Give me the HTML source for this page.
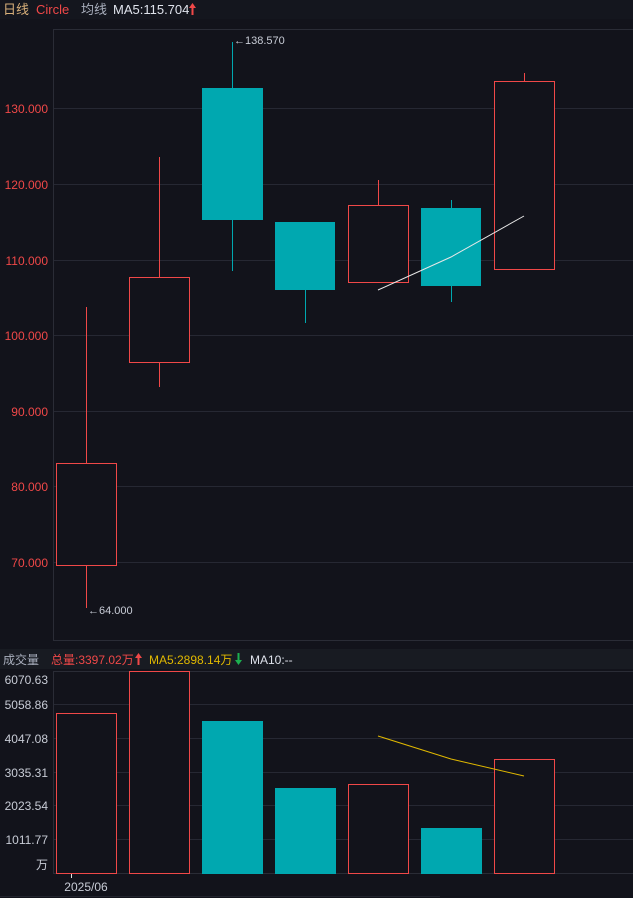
<!DOCTYPE html>
<html><head><meta charset="utf-8"><style>
html,body{margin:0;padding:0;background:#12131b;}
svg{display:block;font-family:"Liberation Sans","Noto Sans CJK SC",sans-serif;}
</style></head><body>
<svg width="633" height="898" xmlns="http://www.w3.org/2000/svg">
<rect width="633" height="898" fill="#12131b"/>
<rect x="0" y="0" width="633" height="19" fill="#14161e"/>
<text x="3" y="14" font-size="13" fill="#d8b07a">日线</text>
<text x="36" y="14" font-size="13" fill="#f04848">Circle</text>
<text x="81" y="14" font-size="13" fill="#a9afbd">均线</text>
<text x="113" y="14" font-size="13" fill="#dfe3ec">MA5:115.704</text>
<path d="M192.5 3 L189 8 L191.5 8 L191.5 15 L193.5 15 L193.5 8 L196 8 Z" fill="#f04848"/>
<!-- main chart frame -->
<rect x="53.5" y="29.5" width="590" height="611" fill="none" stroke="#2a2c36"/>
<g stroke="#262833" stroke-width="1">
<line x1="54" y1="108.5" x2="633" y2="108.5"/>
<line x1="54" y1="184.5" x2="633" y2="184.5"/>
<line x1="54" y1="260.5" x2="633" y2="260.5"/>
<line x1="54" y1="335.5" x2="633" y2="335.5"/>
<line x1="54" y1="411.5" x2="633" y2="411.5"/>
<line x1="54" y1="486.5" x2="633" y2="486.5"/>
<line x1="54" y1="562.5" x2="633" y2="562.5"/>
</g>
<g font-size="12" fill="#f04848" text-anchor="end">
<text x="48" y="113">130.000</text>
<text x="48" y="189">120.000</text>
<text x="48" y="265">110.000</text>
<text x="48" y="340">100.000</text>
<text x="48" y="416">90.000</text>
<text x="48" y="491">80.000</text>
<text x="48" y="567">70.000</text>
</g>
<!-- candles -->
<g stroke="#f04848" fill="#12131b" stroke-width="1">
<line x1="86.5" y1="307" x2="86.5" y2="463"/><line x1="86.5" y1="565" x2="86.5" y2="608"/>
<rect x="56.5" y="463.5" width="60" height="102"/>
<line x1="159.5" y1="157" x2="159.5" y2="277"/><line x1="159.5" y1="362" x2="159.5" y2="387"/>
<rect x="129.5" y="277.5" width="60" height="85"/>
<line x1="378.5" y1="180" x2="378.5" y2="205"/>
<rect x="348.5" y="205.5" width="60" height="77"/>
<line x1="524.5" y1="73" x2="524.5" y2="81"/>
<rect x="494.5" y="81.5" width="60" height="188"/>
</g>
<g stroke="#00a8b0" fill="#00a8b0">
<line x1="232.5" y1="42" x2="232.5" y2="271"/>
<rect x="202" y="88" width="61" height="132" stroke="none"/>
<line x1="305.5" y1="222" x2="305.5" y2="323"/>
<rect x="275" y="222" width="60" height="68" stroke="none"/>
<line x1="451.5" y1="200" x2="451.5" y2="302"/>
<rect x="421" y="208" width="60" height="78" stroke="none"/>
</g>
<polyline points="378,290 451,257 524,216" fill="none" stroke="#e8e8e8" stroke-width="1"/>
<text x="234" y="44" font-size="11" fill="#c8ccd6">←138.570</text>
<text x="88" y="614" font-size="11" fill="#c8ccd6">←64.000</text>
<!-- volume header -->
<rect x="0" y="649" width="633" height="20" fill="#181b22"/>
<text x="3" y="664" font-size="12" fill="#a9afbd">成交量</text>
<text x="51" y="664" font-size="12" fill="#f04848">总量:3397.02万</text>
<path d="M138.5 653 L135 658 L137.5 658 L137.5 665 L139.5 665 L139.5 658 L142 658 Z" fill="#f04848"/>
<text x="149" y="664" font-size="12" fill="#e0b800">MA5:2898.14万</text>
<path d="M238.5 665 L235 660 L237.5 660 L237.5 653 L239.5 653 L239.5 660 L242 660 Z" fill="#1cb050"/>
<text x="250" y="664" font-size="12" fill="#dfe3ec">MA10:--</text>
<!-- volume frame -->
<rect x="53.5" y="671.5" width="590" height="202" fill="none" stroke="#2a2c36"/>
<g stroke="#262833">
<line x1="54" y1="704.5" x2="633" y2="704.5"/>
<line x1="54" y1="738.5" x2="633" y2="738.5"/>
<line x1="54" y1="772.5" x2="633" y2="772.5"/>
<line x1="54" y1="805.5" x2="633" y2="805.5"/>
<line x1="54" y1="839.5" x2="633" y2="839.5"/>
</g>
<g font-size="12" fill="#c8ccd6" text-anchor="end">
<text x="48" y="684">6070.63</text>
<text x="48" y="709">5058.86</text>
<text x="48" y="743">4047.08</text>
<text x="48" y="777">3035.31</text>
<text x="48" y="810">2023.54</text>
<text x="48" y="844">1011.77</text>
<text x="48" y="869">万</text>
</g>
<g stroke="#f04848" fill="#12131b">
<rect x="56.5" y="713.5" width="60" height="160"/>
<rect x="129.5" y="671.5" width="60" height="202"/>
<rect x="348.5" y="784.5" width="60" height="89"/>
<rect x="494.5" y="759.5" width="60" height="114"/>
</g>
<g fill="#00a8b0">
<rect x="202" y="721" width="61" height="153"/>
<rect x="275" y="788" width="61" height="86"/>
<rect x="421" y="828" width="61" height="46"/>
</g>
<polyline points="378,736 451,759 524,776" fill="none" stroke="#e0b800" stroke-width="1"/>
<line x1="71.5" y1="874" x2="71.5" y2="878" stroke="#e0e0e0"/>
<text x="86" y="891" font-size="12" fill="#c8ccd6" text-anchor="middle">2025/06</text>
<line x1="0" y1="896.5" x2="440" y2="896.5" stroke="#22242e"/>
</svg>
</body></html>
